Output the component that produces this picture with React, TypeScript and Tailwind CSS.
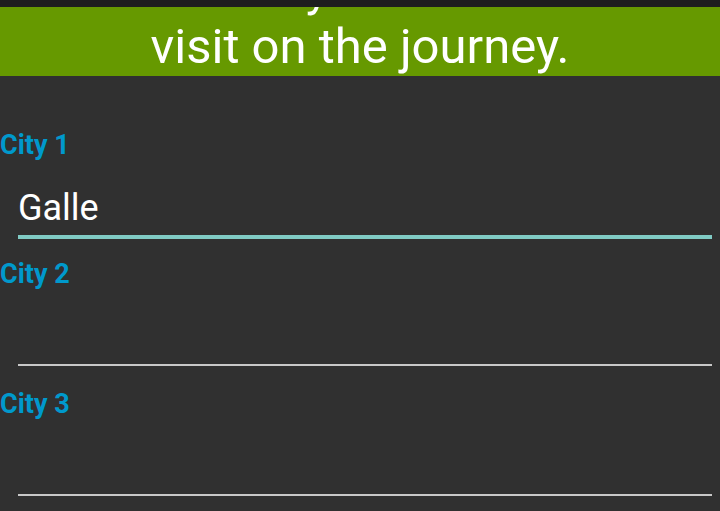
export default function App() {
  const fields = [
    { label: "City 1", value: "Galle", focused: true },
    { label: "City 2", value: "", focused: false },
    { label: "City 3", value: "", focused: false },
  ];

  return (
    <main className="w-[720px] h-[511px] overflow-hidden bg-[#303030] font-['Roboto',sans-serif]">
      {/* Status strip */}
      <div className="h-[7px] bg-[#1e1e1e]" />

      {/* Banner */}
      <div className="h-[69px] overflow-hidden bg-[#669900]">
        <p className="-mt-[47px] text-center text-[49px] leading-[58px] text-white">
          Enter cities you would like to
          <br />
          visit on the journey.
        </p>
      </div>

      {/* Fields */}
      <div className="pt-[54px]">
        {fields.map((f) => (
          <div key={f.label} className={f.focused ? "mb-[20px]" : "mb-[23px]"}>
            <div className="h-[30px] text-[27px] leading-[30px] font-bold text-[#0099cc]">
              {f.label}
            </div>
            <div
              className={
                f.focused
                  ? "ml-[18px] mr-[8px] h-[79px] border-b-4 border-[#80cbc4] pt-[28px]"
                  : "ml-[18px] mr-[8px] h-[77px] border-b-2 border-[#c8c8c8] pt-[28px]"
              }
            >
              <span className="block text-[36px] leading-[40px] text-white">{f.value}</span>
            </div>
          </div>
        ))}
      </div>
    </main>
  );
}
